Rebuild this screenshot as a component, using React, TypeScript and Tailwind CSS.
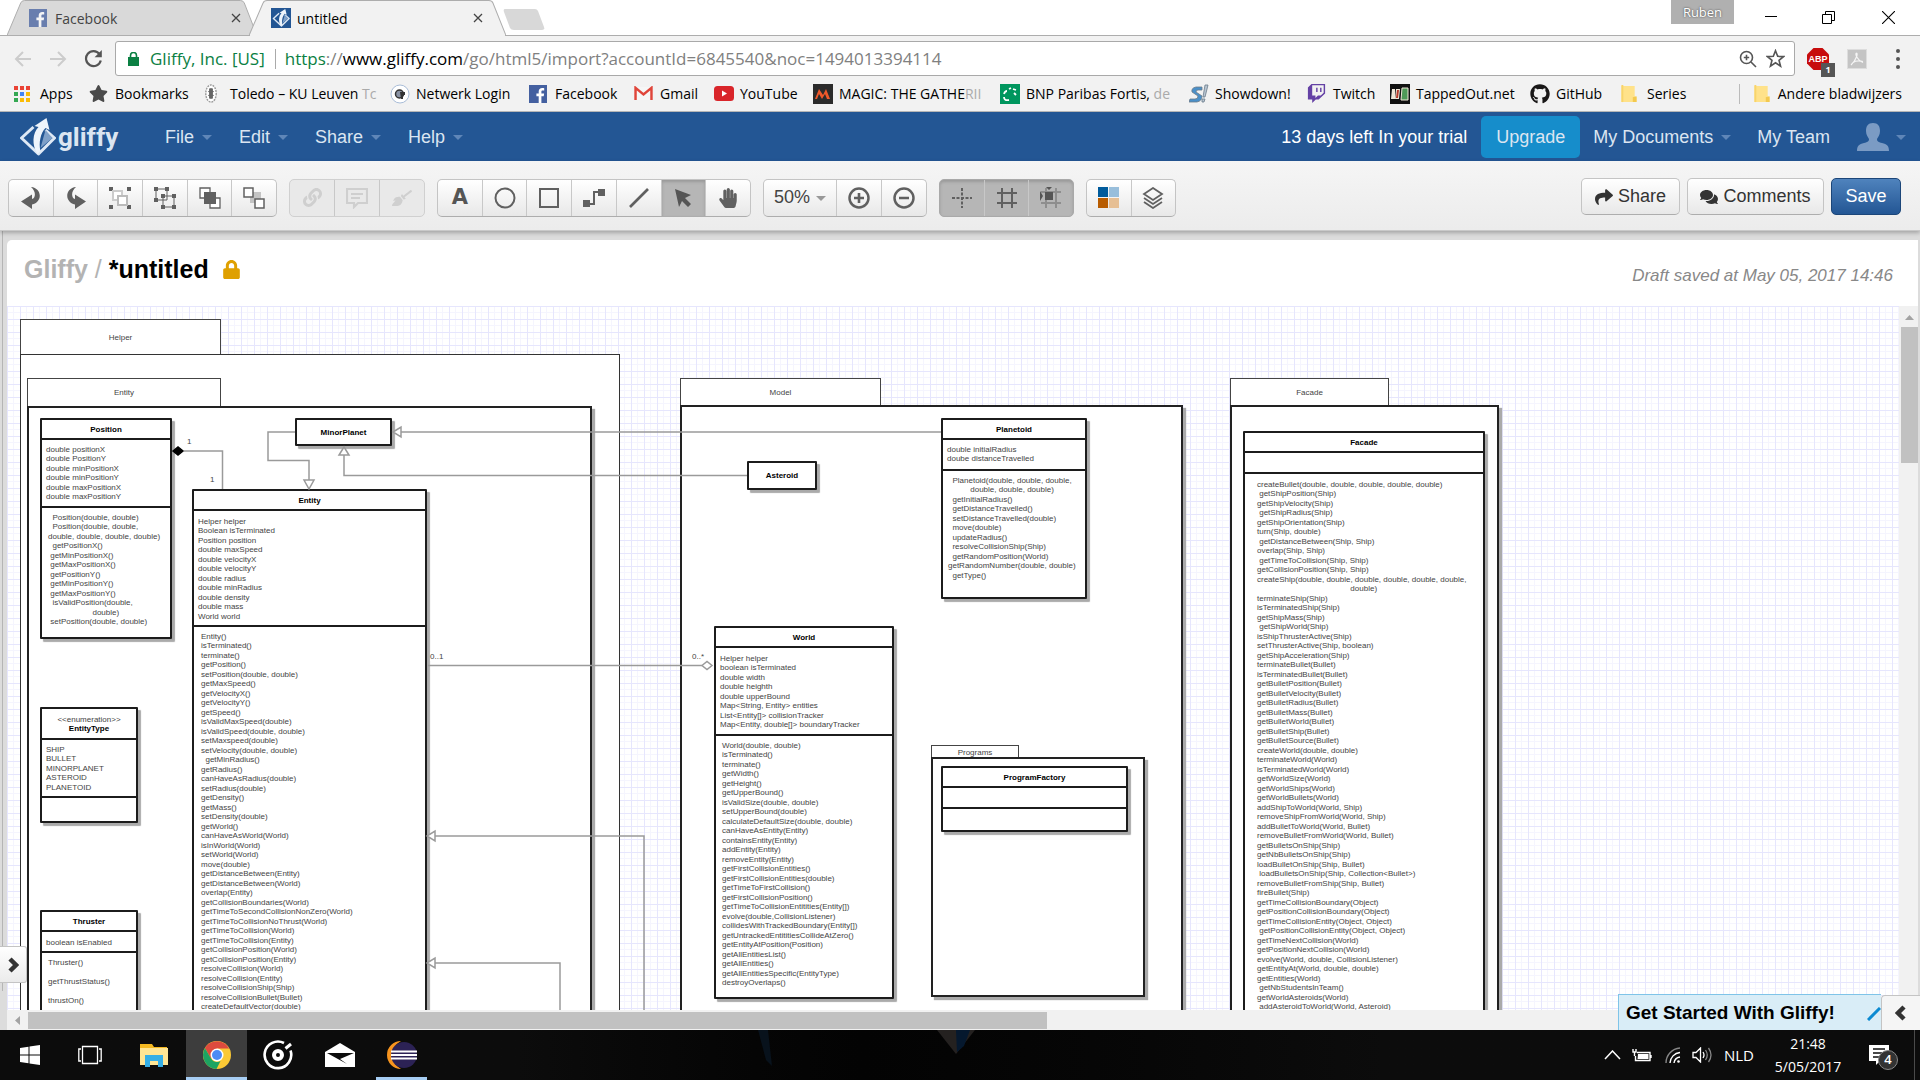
import React from "react";
import {
  FaComments,
  FaGithub,
  FaHandPaper,
  FaLock,
  FaShare,
  FaStar,
  FaTwitch,
  FaBroom,
  FaLink,
} from "react-icons/fa";

const ui = "font-['Open_Sans','Noto_Sans',sans-serif]";

/* ---------- browser window ---------- */

function FacebookIcon({ faded = false }: { faded?: boolean }) {
  return (
    <svg viewBox="0 0 18 18" className={faded ? "size-[18px] opacity-75" : "size-[18px]"} aria-hidden="true">
      <rect width="18" height="18" fill="#4460a0" />
      <path d="M12.4 18v-6.8h2.3l.4-2.7h-2.7V6.9c0-.8.3-1.3 1.4-1.3h1.4V3.2c-.3 0-1.1-.1-2-.1-2.1 0-3.5 1.2-3.5 3.500v1.900H7.400v2.700h2.300V18z" fill="#fff" />
    </svg>
  );
}

function GliffyMark({ className }: { className: string }) {
  return (
    <svg viewBox="0 0 36 38" className={className} aria-hidden="true">
      <path d="M14 9 2 20l17 16 16-16-9-8" fill="none" stroke="#dfe9f5" strokeWidth="3" strokeLinejoin="round" />
      <path d="M26 12l7 8-12 10z" fill="#7fa0c8" />
      <path d="M18 36c-6-9-5-21 1-27l-4-1L27 0l3 12-4-2c-5 5-7 15-5 23z" fill="#eef4fb" />
    </svg>
  );
}

function Tab({ active, title, icon, className }: { active?: boolean; title: string; icon: React.ReactNode; className: string }) {
  return (
    <div className={"relative flex h-[36px] items-center pl-[22px] " + className}>
      <svg viewBox="0 0 256 36" preserveAspectRatio="none" className="absolute inset-0 h-full w-full" aria-hidden="true">
        <path d="M0 35.500 14 3Q15 .5 18 .5H239Q242 .5 243 3L256 35.500z" fill={active ? "#f2f2f2" : "#d9d9d9"} stroke="#adadad" />
        {active && <path d="M1 35.500H255" stroke="#f2f2f2" strokeWidth="2" />}
      </svg>
      <span className="relative flex size-[20px] items-center">{icon}</span>
      <span className={"relative ml-[6px] flex-1 text-[14px] " + (active ? "text-black" : "text-[#444]")}>{title}</span>
      <button aria-label={"Close " + title} className="relative flex size-4 items-center justify-center">
        <svg viewBox="0 0 10 10" className="size-[10px]" aria-hidden="true">
          <path d="M1 1l8 8M9 1 1 9" stroke="#444" strokeWidth="1.300" />
        </svg>
      </button>
    </div>
  );
}

function TabStrip() {
  return (
    <div className="relative flex h-[36px] items-stretch bg-white pl-[7px]">
      <div className="absolute inset-x-0 bottom-0 h-px bg-[#adadad]" />
      <Tab title="Facebook" icon={<FacebookIcon faded />} className="w-[250px] pr-[13px]" />
      <Tab
        active
        title="untitled"
        className="-ml-[8px] w-[257px] pr-[20px]"
        icon={
          <span className="flex size-[20px] items-center justify-center bg-[#235694]">
            <GliffyMark className="size-[18px]" />
          </span>
        }
      />
      <button aria-label="New tab" className="relative -ml-[4px] h-[36px] w-[44px]">
        <svg viewBox="0 0 44 36" className="size-full" aria-hidden="true">
          <path d="M3 9H33q2 0 3 2l6 16q1 3-2 3H12q-3 0-4-2L2 12q-1-3 1-3z" fill="#d8d8d8" />
        </svg>
      </button>
      <div className="relative ml-auto flex">
        <button className={"mr-[7px] h-[24px] w-[63px] bg-[#b0b0b0] text-[13px] leading-[22px] text-white [text-shadow:0_0_2px_#333] " + ui}>Ruben</button>
        <button aria-label="Minimize" className="flex h-[34px] w-[60px] items-center justify-center">
          <svg viewBox="0 0 12 12" className="size-3" aria-hidden="true"><path d="M0 5.500h12" stroke="#000" /></svg>
        </button>
        <button aria-label="Restore" className="flex h-[34px] w-[55px] items-center justify-center">
          <svg viewBox="0 0 13 13" className="size-[13px]" fill="none" stroke="#000" aria-hidden="true">
            <path d="M.5 3.500h9v9h-9zM3.500 3.500v-3h9v9h-3" />
          </svg>
        </button>
        <button aria-label="Close" className="flex h-[34px] w-[64px] items-center justify-center">
          <svg viewBox="0 0 12 12" className="size-[13px]" aria-hidden="true"><path d="M0 0l12 12M12 0 0 12" stroke="#000" /></svg>
        </button>
      </div>
    </div>
  );
}

function AddressBar() {
  return (
    <div className="flex h-[42px] items-center bg-[#f2f2f2] pl-[14px] pr-[11px] pt-[3px]">
      <button aria-label="Back" className="w-[18px]">
        <svg viewBox="0 0 18 18" className="size-[18px]" fill="none" stroke="#ccc" strokeWidth="2" aria-hidden="true"><path d="M17 9H2M9 2 2 9l7 7" /></svg>
      </button>
      <button aria-label="Forward" className="ml-[17px] w-[18px]">
        <svg viewBox="0 0 18 18" className="size-[18px]" fill="none" stroke="#ccc" strokeWidth="2" aria-hidden="true"><path d="M1 9h15M9 2l7 7-7 7" /></svg>
      </button>
      <button aria-label="Reload" className="ml-[17px] w-[19px]">
        <svg viewBox="0 0 19 19" className="size-[19px]" fill="none" stroke="#555" strokeWidth="2.200" aria-hidden="true">
          <path d="M15.500 5A7.500 7.500 0 1 0 16.800 11.500" />
          <path d="M17.800 1v7.200h-7.200z" fill="#555" stroke="none" />
        </svg>
      </button>
      <div className="ml-[12px] flex h-[35px] flex-1 items-center rounded-[3px] border border-[#a9a9a9] bg-white pl-[12px] pr-[9px]">
        <svg viewBox="0 0 11 14" className="h-[14px] w-[11px]" aria-hidden="true">
          <path d="M0 5h11v9H0z" fill="#0b8043" />
          <path d="M2.500 6V3.500a3 3 0 0 1 6 0V6" fill="none" stroke="#0b8043" strokeWidth="1.600" />
        </svg>
        <span className="ml-[11px] text-[17px] text-[#0b8043]">Gliffy, Inc. [US]</span>
        <span className="ml-[10px] h-[20px] w-px bg-[#aaa]" />
        <div role="textbox" aria-label="Address" contentEditable suppressContentEditableWarning className="ml-[9px] flex-1 whitespace-nowrap text-[17px] text-[#808080]">
          <span className="text-[#0b8043]">https</span>://<span className="text-black">www.gliffy.com</span>/go/html5/import?accountId=6845540&amp;noc=1494013394114
        </div>
        <button aria-label="Zoom level">
          <svg viewBox="0 0 18 18" className="size-[18px]" fill="none" stroke="#555" strokeWidth="1.600" aria-hidden="true">
            <circle cx="7.500" cy="7.500" r="6" /><path d="M12 12l5 5M7.500 4.800v5.400M4.800 7.500h5.400" />
          </svg>
        </button>
        <button aria-label="Bookmark this page" className="ml-[9px]">
          <svg viewBox="0 0 20 20" className="size-[19px]" fill="none" stroke="#555" strokeWidth="1.700" aria-hidden="true">
            <path d="m10 1.800 2.300 5.900 6.200.3-4.800 3.900 1.600 6.100L10 14.500 4.700 18l1.600-6.100L1.500 8l6.200-.3z" />
          </svg>
        </button>
      </div>
      <button aria-label="AdBlock Plus, 1 blocked" className="relative ml-[12px] size-[22px]">
        <svg viewBox="0 0 22 22" className="size-[22px]" aria-hidden="true">
          <path d="M6.500 0h9L22 6.500v9L15.500 22h-9L0 15.500v-9z" fill="#c70d0d" />
        </svg>
        <span className="absolute inset-x-0 top-[5px] text-center font-['Liberation_Sans',sans-serif] text-[9px] font-bold leading-[12px] text-white">ABP</span>
        <span className="absolute -bottom-[7px] left-[14px] h-[14px] w-[14px] bg-[#555] text-center text-[9px] font-bold leading-[14px] text-white">1</span>
      </button>
      <button aria-label="Adobe Acrobat" className="ml-[18px] flex size-[20px] items-center justify-center border border-[#ddd] bg-[#c4c4c4]">
        <svg viewBox="0 0 16 16" className="size-4" fill="none" stroke="#f5f5f5" strokeWidth="1.200" aria-hidden="true">
          <path d="M7.500 2C9 2 8 8 2 14M7.500 2C6 3 8 9 14 11.500M4 11.500c3-2 6-2 10-1" />
        </svg>
      </button>
      <button aria-label="Menu" className="ml-[20px] flex w-[22px] flex-col items-center gap-[4px]">
        <span className="size-[4px] rounded-full bg-[#555]" />
        <span className="size-[4px] rounded-full bg-[#555]" />
        <span className="size-[4px] rounded-full bg-[#555]" />
      </button>
    </div>
  );
}

const appColors = ["#ea4335", "#ea4335", "#ea4335", "#34a853", "#4285f4", "#fbbc05", "#34a853", "#fbbc05", "#fbbc05"];

function Folder() {
  return (
    <svg viewBox="0 0 16 19" className="h-[18px] w-[16px]" aria-hidden="true">
      <path d="M0 1h14v11l2 1v5H0z" fill="#ffe28a" />
      <path d="M0 0h2v18H0z" fill="#f8d46b" />
      <path d="M12 18v-5l4-1v6z" fill="#f3c94f" />
    </svg>
  );
}

const bookmarks: { label: string; tail?: string; box: string; icon: React.ReactNode }[] = [
  {
    label: "Apps",
    box: "w-[75px]",
    icon: (
      <span className="grid grid-cols-3 gap-[2px]">
        {appColors.map((c, i) => (
          <span key={i} className="size-[4px]" style={{ background: c }} />
        ))}
      </span>
    ),
  },
  { label: "Bookmarks", box: "w-[115px]", icon: <FaStar className="size-[19px] text-[#4a4a4a]" /> },
  {
    label: "Toledo – KU Leuven ",
    tail: "Tc",
    box: "w-[186px]",
    icon: (
      <svg viewBox="0 0 14 20" className="h-[19px] w-[14px]" aria-hidden="true">
        <ellipse cx="7" cy="10" rx="5.500" ry="9" fill="#fff" stroke="#999" strokeWidth="1.500" strokeDasharray="2 1" />
        <path d="M5.500 5h3v10h-3zM4 8h6M4 12h6" fill="#666" stroke="#666" />
      </svg>
    ),
  },
  {
    label: "Netwerk Login",
    box: "w-[139px]",
    icon: (
      <svg viewBox="0 0 20 20" className="size-[20px]" aria-hidden="true">
        <circle cx="10" cy="10" r="9" fill="#fff" stroke="#a9bdd8" />
        <circle cx="9.500" cy="10" r="4" fill="#8a93a5" stroke="#333" strokeWidth="1.500" />
        <path d="M10 8h5v3h-2v4h-2z" fill="#333" />
      </svg>
    ),
  },
  { label: "Facebook", box: "w-[105px]", icon: <FacebookIcon /> },
  {
    label: "Gmail",
    box: "w-[80px]",
    icon: (
      <svg viewBox="0 0 20 16" className="h-[15px] w-[19px]" aria-hidden="true">
        <path d="M1 1h18v14H1z" fill="#f6f6f6" />
        <path d="M1.500 15V2L10 9l8.500-7v13" fill="none" stroke="#e0453a" strokeWidth="2.600" />
      </svg>
    ),
  },
  {
    label: "YouTube",
    box: "w-[99px]",
    icon: (
      <svg viewBox="0 0 20 15" className="h-[15px] w-[20px]" aria-hidden="true">
        <rect width="20" height="15" rx="3.500" fill="#d9252a" /><path d="m8 4.500 5 3-5 3z" fill="#fff" />
      </svg>
    ),
  },
  {
    label: "MAGIC: THE GATHE",
    tail: "RII",
    box: "w-[187px]",
    icon: (
      <svg viewBox="0 0 20 20" className="size-[20px]" aria-hidden="true">
        <rect width="20" height="20" fill="#2b2b2b" />
        <path d="M2 15 6 5l4 6 3-6 4 10h-3l-2-5-3 5-3-5-2 5z" fill="#f0592a" />
      </svg>
    ),
  },
  {
    label: "BNP Paribas Fortis,",
    tail: " de",
    box: "w-[189px]",
    icon: (
      <svg viewBox="0 0 20 20" className="size-[20px]" aria-hidden="true">
        <rect width="20" height="20" fill="#00965e" />
        <path d="M4 13q0 4 5 3M4 10q1-3 3-3M9 5l2-1M13 5l3 1M14 9l2 2" fill="none" stroke="#fff" strokeWidth="1.800" />
      </svg>
    ),
  },
  {
    label: "Showdown!",
    box: "w-[118px]",
    icon: (
      <svg viewBox="0 0 20 20" className="size-[20px]" aria-hidden="true">
        <path d="M13 3H7Q2 4 3 8l6 4q0 3-3 3H1l-1 3h8q5-1 5-6L7 8q0-2 2-2h4z" fill="#4a90c9" stroke="#6b7b8a" strokeWidth=".8" />
        <path d="M16 1h3l-3 12h-2zM13 15h3l-1 3h-2z" fill="#b9c6d2" stroke="#6b7b8a" strokeWidth=".8" />
      </svg>
    ),
  },
  { label: "Twitch", box: "w-[83px]", icon: <FaTwitch className="size-[19px] text-[#6441a5]" /> },
  {
    label: "TappedOut.net",
    box: "w-[140px]",
    icon: (
      <svg viewBox="0 0 20 20" className="size-[20px]" aria-hidden="true">
        <rect width="20" height="20" fill="#111" />
        <path d="M2 5h3v10H1zM6 5h4l-1 10H5z" fill="#f0e7d8" />
        <path d="M7 6h2l-1 8H6z" fill="#b83a2a" /><path d="M12 4h6v12h-7z" fill="#4f9a58" stroke="#f0e7d8" />
      </svg>
    ),
  },
  { label: "GitHub", box: "w-[91px]", icon: <FaGithub className="size-[20px] text-[#191717]" /> },
  { label: "Series", box: "w-[80px]", icon: <Folder /> },
];

function BookmarkBar() {
  return (
    <nav aria-label="Bookmarks" className="flex h-[34px] items-center border-b border-[#b6b6b6] bg-[#f2f2f2] pb-[2px] pl-[14px] pr-[18px] text-[14px] text-black">
      {bookmarks.map((b) => (
        <a key={b.label} href="#" className={"flex shrink-0 items-center gap-[6px] whitespace-nowrap " + b.box}>
          <span className="flex w-[20px] shrink-0 items-center">{b.icon}</span>
          <span>
            {b.label}
            {b.tail && <span className="text-[#aaa]">{b.tail}</span>}
          </span>
        </a>
      ))}
      <span className="ml-auto h-[20px] w-px bg-[#bbb]" />
      <a href="#" className="ml-[14px] flex items-center gap-[8px] whitespace-nowrap">
        <Folder />
        Andere bladwijzers
      </a>
    </nav>
  );
}

/* ---------- application header ---------- */

function Caret({ className }: { className: string }) {
  return (
    <svg viewBox="0 0 10 5" className={"h-[5px] w-[10px] " + className} aria-hidden="true">
      <path d="M0 0h10L5 5z" fill="currentColor" />
    </svg>
  );
}

const menus = [
  { label: "File", box: "w-[74px]" },
  { label: "Edit", box: "w-[76px]" },
  { label: "Share", box: "w-[93px]" },
  { label: "Help", box: "w-[60px]" },
];

function AppNav() {
  return (
    <header className="flex h-[49px] shrink-0 items-center bg-[#235694] pl-[19px] pr-[14px] pt-px text-[18px] text-[#dbe5f1]">
      <a href="#" className="flex w-[146px] items-center">
        <GliffyMark className="h-[38px] w-[37px]" />
        <span className="ml-[2px] font-['Roboto',sans-serif] text-[26px] font-bold leading-[36px]">gliffy</span>
      </a>
      {menus.map((m) => (
        <button key={m.label} className={"flex items-center gap-[8px] " + m.box}>
          {m.label}
          <Caret className="text-[#5f86b8]" />
        </button>
      ))}
      <span className="ml-auto text-white">13 days left In your trial</span>
      <button className="ml-[14px] h-[42px] w-[99px] rounded-[5px] bg-[#168dcb]">Upgrade</button>
      <button className="ml-[13px] flex items-center gap-[8px]">
        My Documents
        <Caret className="text-[#5f86b8]" />
      </button>
      <a href="#" className="ml-[26px]">My Team</a>
      <button aria-label="Account" className="ml-[27px] flex items-center gap-[7px]">
        <svg viewBox="0 0 32 28" className="h-[28px] w-[32px]" aria-hidden="true">
          <path d="M16 0c5 0 7 3 7 8 0 4-2 6-3 8 0 3 2 3 5 4 5 1 7 3 7 8H0c0-5 2-7 7-8 3-1 5-1 5-4-1-2-3-4-3-8 0-5 2-8 7-8z" fill="#7b9bc4" />
        </svg>
        <Caret className="text-[#5f86b8]" />
      </button>
    </header>
  );
}

/* ---------- toolbar ---------- */

type Tone = "normal" | "disabled" | "pressed";

function Group({ children, tone = "normal", box }: { children: React.ReactNode; tone?: Tone; box: string }) {
  const tones = {
    normal: "border-[#c4c4c4] border-b-[#adadad] bg-linear-to-b from-white to-[#e8e8e8]",
    disabled: "border-[#d0d0d0] bg-[#e9e9e9]",
    pressed: "border-[#a9a9a9] bg-[#b6b6b6]",
  };
  return <div className={"flex h-[38px] divide-x divide-[#c8c8c8] overflow-hidden rounded-[5px] border " + tones[tone] + " " + box}>{children}</div>;
}

function Tool({ label, children, pressed, disabled }: { label: string; children: React.ReactNode; pressed?: boolean; disabled?: boolean }) {
  return (
    <button
      aria-label={label}
      disabled={disabled}
      className={"flex flex-1 items-center justify-center " + (pressed ? "bg-[#b6b6b6] shadow-[inset_0_2px_3px_#999]" : "")}
    >
      {children}
    </button>
  );
}

function Glyph({ children }: { children: React.ReactNode }) {
  return (
    <svg viewBox="0 0 22 22" className="size-[22px]" fill="none" stroke="#606060" strokeWidth="2" aria-hidden="true">
      {children}
    </svg>
  );
}

function Toolbar() {
  return (
    <div className="relative z-10 flex h-[70px] shrink-0 items-center border-b border-[#c9c9c9] bg-linear-to-b from-[#f5f5f5] to-[#ececec] pl-[8px] pr-[19px] pt-[4px] shadow-[0_2px_4px_rgba(0,0,0,0.25)]">
      <Group box="w-[269px]">
        <Tool label="Undo">
          <Glyph><path d="M11 0c11 1 12 15 1 17.500V22L1 14.500 12 7.500V12c4-1 4-8-1-12z" fill="#606060" stroke="none" /></Glyph>
        </Tool>
        <Tool label="Redo">
          <Glyph><path d="M11 0C0 1-1 15 10 17.500V22l11-7.500-11-7V12C6 11 6 4 11 0z" fill="#606060" stroke="none" /></Glyph>
        </Tool>
        <Tool label="Group">
          <Glyph>
            <path d="M0 0h4v4H0zM18 0h4v4h-4zM0 18h4v4H0zM18 18h4v4h-4z" fill="#606060" stroke="none" />
            <path d="M4 4h9v9H4z" fill="#fff" stroke="#ccc" /><path d="M9 9h9v9H9z" fill="#fff" stroke="#bbb" />
          </Glyph>
        </Tool>
        <Tool label="Ungroup">
          <Glyph>
            <path d="M2 2h11v11H2zM9 9h11v11H9z" strokeWidth="1" />
            <path d="M0 0h4v4H0zM11 0h4v4h-4zM0 11h4v4H0zM7 7h4v4H7zM18 7h4v4h-4zM7 18h4v4H7zM18 18h4v4h-4z" fill="#606060" stroke="none" />
          </Glyph>
        </Tool>
        <Tool label="Bring to front">
          <Glyph>
            <path d="M1 1h10v10H1zM11 11h10v10H11z" fill="#fff" strokeWidth="1.300" /><path d="M5 5h12v12H5z" fill="#606060" stroke="none" />
          </Glyph>
        </Tool>
        <Tool label="Send to back">
          <Glyph>
            <path d="M7 5h11v11H7z" fill="#c4c4c4" stroke="none" /><path d="M1 1h9v9H1zM12 12h9v9h-9z" fill="#fff" strokeWidth="1.500" />
          </Glyph>
        </Tool>
      </Group>
      <Group tone="disabled" box="ml-[12px] w-[136px]">
        <Tool label="Link" disabled><FaLink className="size-[19px] text-[#cfcfcf]" /></Tool>
        <Tool label="Comment" disabled>
          <svg viewBox="0 0 22 22" className="size-[22px]" fill="none" stroke="#cfcfcf" strokeWidth="2.200" aria-hidden="true">
            <path d="M1 2h20v14h-9l-4 4v-4H1zM5 7h12M5 11h9" />
          </svg>
        </Tool>
        <Tool label="Copy style" disabled><FaBroom className="size-[20px] text-[#cfcfcf]" /></Tool>
      </Group>
      <Group box="ml-[12px] w-[314px]">
        <Tool label="Text"><span className="font-['DejaVu_Sans',sans-serif] text-[21px] font-bold text-[#555]">A</span></Tool>
        <Tool label="Ellipse"><Glyph><circle cx="11" cy="11" r="9.500" /></Glyph></Tool>
        <Tool label="Rectangle"><Glyph><path d="M2 2h18v18H2z" /></Glyph></Tool>
        <Tool label="Connector">
          <Glyph><path d="M3 17h8V5h8" /><path d="M0 13h7v7H0zM15 2h7v7h-7z" fill="#606060" stroke="none" /></Glyph>
        </Tool>
        <Tool label="Line"><Glyph><path d="M2 20 20 2" strokeWidth="2.600" /></Glyph></Tool>
        <Tool label="Pointer" pressed>
          <Glyph><path d="M3 2l16 6-6 3 6 6-3 3-6-6-3 6z" fill="#555" stroke="none" /></Glyph>
        </Tool>
        <Tool label="Pan"><FaHandPaper className="size-[20px] text-[#606060]" /></Tool>
      </Group>
      <Group box="ml-[12px] w-[164px]">
        <div className="relative flex w-[73px] items-center">
          <select aria-label="Zoom" defaultValue="50" className="h-full w-full appearance-none bg-transparent pl-[10px] text-[18px] text-[#444]">
            <option value="50">50%</option>
            <option value="75">75%</option>
          </select>
          <span className="pointer-events-none absolute right-[10px] top-[16px]"><Caret className="text-[#999]" /></span>
        </div>
        <Tool label="Zoom in"><Glyph><circle cx="11" cy="11" r="9.500" strokeWidth="2.500" /><path d="M11 6v10M6 11h10" strokeWidth="2.600" /></Glyph></Tool>
        <Tool label="Zoom out"><Glyph><circle cx="11" cy="11" r="9.500" strokeWidth="2.500" /><path d="M6 11h10" strokeWidth="2.600" /></Glyph></Tool>
      </Group>
      <Group tone="pressed" box="ml-[12px] w-[135px] divide-[#a6a6a6] shadow-[inset_0_2px_3px_#999]">
        <Tool label="Drawing guides"><Glyph><path d="M11 1v20M1 11h20" strokeDasharray="3 1.500" /></Glyph></Tool>
        <Tool label="Grid"><Glyph><path d="M6 1v20M16 1v20M1 6h20M1 16h20" /></Glyph></Tool>
        <Tool label="Snap to grid">
          <Glyph><path d="M6 1v20M16 1v20M1 5h20M1 16h20" stroke="#8e8e8e" /><path d="M5 5h8v8H5zM0 4l3 5-3 5zM6 0h6l-3 3z" fill="#555" stroke="none" /></Glyph>
        </Tool>
      </Group>
      <Group box="ml-[12px] w-[90px]">
        <Tool label="Theme">
          <svg viewBox="0 0 22 22" className="size-[21px]" aria-hidden="true">
            <path d="M0 0h10.500v10.500H0z" fill="#005b9c" /><path d="M11.500 0H22v10.500H11.500z" fill="#98bedb" />
            <path d="M0 11.500h10.500V22H0z" fill="#b85c00" /><path d="M11.500 11.500H22V22H11.500z" fill="#e6bf94" />
          </svg>
        </Tool>
        <Tool label="Layers">
          <Glyph><path d="m11 1 9 6-9 6-9-6zM2 11l9 6 9-6M2 15l9 6 9-6" strokeWidth="1.800" /></Glyph>
        </Tool>
      </Group>
      <div className="ml-auto flex gap-[7px] pb-[2px] text-[18px] text-[#333]">
        <button className="flex h-[37px] w-[99px] items-center justify-center gap-[5px] rounded-[5px] border border-[#c4c4c4] border-b-[#adadad] bg-linear-to-b from-white to-[#e8e8e8]">
          <FaShare className="size-[18px]" />
          Share
        </button>
        <button className="flex h-[37px] w-[137px] items-center justify-center gap-[5px] rounded-[5px] border border-[#c4c4c4] border-b-[#adadad] bg-linear-to-b from-white to-[#e8e8e8]">
          <FaComments className="size-[18px]" />
          Comments
        </button>
        <button className="h-[37px] w-[70px] rounded-[5px] border border-[#1c4679] bg-linear-to-b from-[#4f83bd] to-[#235694] text-white">Save</button>
      </div>
    </div>
  );
}

/* ---------- diagram ---------- */

const packages = [
  { name: "Helper", tab: "left-[13px] top-[13px] w-[201px] h-[36px]", body: "left-[13px] top-[48px] w-[600px] h-[1200px]", line: "border border-[#333]" },
  { name: "Entity", tab: "left-[20px] top-[72px] w-[194px] h-[29px]", body: "left-[20px] top-[100px] w-[565px] h-[1200px] shadow-[3px_3px_1px_#aaa]", line: "border-2 border-[#222]" },
  { name: "Model", tab: "left-[673px] top-[72px] w-[201px] h-[29px]", body: "left-[673px] top-[99px] w-[503px] h-[1200px] shadow-[3px_3px_1px_#aaa]", line: "border-2 border-[#222]" },
  { name: "Facade", tab: "left-[1223px] top-[72px] w-[159px] h-[29px]", body: "left-[1223px] top-[99px] w-[269px] h-[1200px] shadow-[3px_3px_1px_#aaa]", line: "border-2 border-[#222]" },
  { name: "Programs", tab: "left-[924px] top-[439px] w-[88px] h-[14px]", body: "left-[924px] top-[451px] w-[214px] h-[240px] shadow-[3px_3px_1px_#aaa]", line: "border-2 border-[#222]" },
];

type ClassNode = {
  name: string;
  stereotype?: string;
  box: string;
  head?: string;
  attrBox?: string;
  attrs?: string[];
  pad?: string;
  methods?: string[];
};

const classes: ClassNode[] = [
  {
    name: "Position",
    box: "left-[33px] top-[112px] w-[132px] h-[221px]",
    attrBox: "h-[68px] pt-[5px]",
    attrs: ["double positionX", "double PositionY", "double minPositionX", "double minPositionY", "double maxPositionX", "double maxPositionY"],
    pad: "pl-[6px] pt-[5px]",
    methods: [
      "  Position(double, double)",
      "  Position(double, double,",
      "double, double, double, double)",
      "  getPositionX()",
      " getMinPositionX()",
      " getMaxPositionX()",
      " getPositionY()",
      " getMinPositionY()",
      " getMaxPositionY()",
      "  isValidPosition(double,",
      "                    double)",
      " setPosition(double, double)",
    ],
  },
  {
    name: "Entity",
    box: "left-[185px] top-[183px] w-[235px] h-[1000px]",
    attrBox: "h-[116px] pt-[6px]",
    attrs: ["Helper helper", "Boolean isTerminated", "Position position", "double maxSpeed", "double velocityX", "double velocityY", "double radius", "double minRadius", "double density", "double mass", "World world"],
    pad: "pl-[7px] pt-[5px]",
    methods: [
      "Entity()",
      "isTerminated()",
      "terminate()",
      "getPosition()",
      "setPosition(double, double)",
      "getMaxSpeed()",
      "getVelocityX()",
      "getVelocityY()",
      "getSpeed()",
      "isValidMaxSpeed(double)",
      "isValidSpeed(double, double)",
      "setMaxspeed(double)",
      "setVelocity(double, double)",
      "  getMinRadius()",
      "getRadius()",
      "canHaveAsRadius(double)",
      "setRadius(double)",
      "getDensity()",
      "getMass()",
      "setDensity(double)",
      "getWorld()",
      "canHaveAsWorld(World)",
      "isInWorld(World)",
      "setWorld(World)",
      "move(double)",
      "getDistanceBetween(Entity)",
      "getDistanceBetween(World)",
      "overlap(Entity)",
      "getCollisionBoundaries(World)",
      "getTimeToSecondCollisionNonZero(World)",
      "getTimeToCollisionNoThrust(World)",
      "getTimeToCollision(World)",
      "getTimeToCollision(Entity)",
      "getCollisionPosition(World)",
      "getCollisionPosition(Entity)",
      "resolveCollision(World)",
      "resolveCollision(Entity)",
      "resolveCollisionShip(Ship)",
      "resolveCollisionBullet(Bullet)",
      "createDefaultVector(double)",
    ],
  },
  {
    name: "EntityType",
    stereotype: "<<enumeration>>",
    box: "left-[33px] top-[401px] w-[98px] h-[116px]",
    head: "h-[31px]",
    attrBox: "h-[58px] pt-[5px]",
    attrs: ["SHIP", "BULLET", "MINORPLANET", "ASTEROID", "PLANETOID"],
    methods: [],
  },
  {
    name: "Thruster",
    box: "left-[33px] top-[604px] w-[98px] h-[600px]",
    attrBox: "h-[21px] pt-[6px]",
    attrs: ["boolean isEnabled"],
    pad: "pl-[6px] pt-[5px]",
    methods: ["Thruster()", "", "getThrustStatus()", "", "thrustOn()"],
  },
  { name: "MinorPlanet", box: "left-[288px] top-[112px] w-[97px] h-[28px]", head: "flex-1" },
  { name: "Asteroid", box: "left-[740px] top-[155px] w-[70px] h-[29px]", head: "flex-1" },
  {
    name: "Planetoid",
    box: "left-[934px] top-[112px] w-[146px] h-[181px]",
    attrBox: "h-[31px] pt-[5px]",
    attrs: ["double initialRadius", "doube distanceTravelled"],
    pad: "pl-[5px] pt-[5px]",
    methods: [
      "  Planetoid(double, double, double,",
      "          double, double, double)",
      "  getInitialRadius()",
      "  getDistanceTravelled()",
      "  setDistanceTravelled(double)",
      "  move(double)",
      "  updateRadius()",
      "  resolveCollisionShip(Ship)",
      "  getRandomPosition(World)",
      "getRandomNumber(double, double)",
      "  getType()",
    ],
  },
  {
    name: "World",
    box: "left-[707px] top-[320px] w-[180px] h-[373px]",
    attrBox: "h-[88px] pt-[6px]",
    attrs: ["Helper helper", "boolean isTerminated", "double width", "double heighth", "double upperBound", "Map<String, Entity> entities", "List<Entity[]> collisionTracker", "Map<Entity, double[]> boundaryTracker"],
    pad: "pl-[6px] pt-[5px]",
    methods: [
      "World(double, double)",
      "isTerminated()",
      "terminate()",
      "getWidth()",
      "getHeight()",
      "getUpperBound()",
      "isValidSize(double, double)",
      "setUpperBound(double)",
      "calculateDefaultSize(double, double)",
      "canHaveAsEntity(Entity)",
      "containsEntity(Entity)",
      "addEntity(Entity)",
      "removeEntity(Entity)",
      "getFirstCollisionEntities()",
      "getFirstCollisionEntities(double)",
      "getTimeToFirstCollision()",
      "getFirstCollisionPosition()",
      "getTimeToCollisionEntitities(Entity[])",
      "evolve(double,CollisionListener)",
      "collidesWithTrackedBoundary(Entity[])",
      "getUntrackedEntititiesCollideAtZero()",
      "getEntityAtPosition(Position)",
      "getAllEntitiesList()",
      "getAllEntities()",
      "getAllEntitiesSpecific(EntityType)",
      "destroyOverlaps()",
    ],
  },
  { name: "ProgramFactory", box: "left-[934px] top-[460px] w-[187px] h-[66px]", attrBox: "h-[21px]", attrs: [], methods: [] },
  {
    name: "Facade",
    box: "left-[1236px] top-[125px] w-[242px] h-[1000px]",
    attrBox: "h-[21px]",
    attrs: [],
    pad: "pl-[12px] pt-[6px]",
    methods: [
      "createBullet(double, double, double, double, double)",
      " getShipPosition(Ship)",
      "getShipVelocity(Ship)",
      " getShipRadius(Ship)",
      "getShipOrientation(Ship)",
      "turn(Ship, double)",
      " getDistanceBetween(Ship, Ship)",
      "overlap(Ship, Ship)",
      " getTimeToCollision(Ship, Ship)",
      "getCollisionPosition(Ship, Ship)",
      "createShip(double, double, double, double, double, double,",
      "                                          double)",
      "terminateShip(Ship)",
      "isTerminatedShip(Ship)",
      "getShipMass(Ship)",
      " getShipWorld(Ship)",
      "isShipThrusterActive(Ship)",
      "setThrusterActive(Ship, boolean)",
      "getShipAcceleration(Ship)",
      "terminateBullet(Bullet)",
      "isTerminatedBullet(Bullet)",
      "getBulletPosition(Bullet)",
      "getBulletVelocity(Bullet)",
      "getBulletRadius(Bullet)",
      "getBulletMass(Bullet)",
      "getBulletWorld(Bullet)",
      "getBulletShip(Bullet)",
      "getBulletSource(Bullet)",
      "createWorld(double, double)",
      "terminateWorld(World)",
      "isTerminatedWorld(World)",
      "getWorldSize(World)",
      "getWorldShips(World)",
      "getWorldBullets(World)",
      "addShipToWorld(World, Ship)",
      "removeShipFromWorld(World, Ship)",
      "addBulletToWorld(World, Bullet)",
      "removeBulletFromWorld(World, Bullet)",
      "getBulletsOnShip(Ship)",
      "getNbBulletsOnShip(Ship)",
      "loadBulletOnShip(Ship, Bullet)",
      " loadBulletsOnShip(Ship, Collection<Bullet>)",
      "removeBulletFromShip(Ship, Bullet)",
      "fireBullet(Ship)",
      "getTimeCollisionBoundary(Object)",
      "getPositionCollisionBoundary(Object)",
      "getTimeCollisionEntity(Object, Object)",
      " getPositionCollisionEntity(Object, Object)",
      "getTimeNextCollision(World)",
      "getPositionNextCollision(World)",
      "evolve(World, double, CollisionListener)",
      "getEntityAt(World, double, double)",
      "getEntities(World)",
      " getNbStudentsInTeam()",
      "getWorldAsteroids(World)",
      " addAsteroidToWorld(World, Asteroid)",
    ],
  },
];

function Lines({ items }: { items: string[] }) {
  return (
    <ul>
      {items.map((t, i) => (
        <li key={i} className="h-[9px] whitespace-pre leading-[9px] even:h-[10px]">
          {t}
        </li>
      ))}
    </ul>
  );
}

function ClassBox({ node }: { node: ClassNode }) {
  return (
    <section className={"absolute flex flex-col rounded-[1px] border-2 border-[#1c1c1c] bg-white shadow-[3px_3px_1px_#aaa] " + node.box}>
      <h3 className={"flex shrink-0 flex-col items-center justify-center text-center leading-[9px] " + (node.head ?? "h-[20px]") + (node.attrs ? " border-b-2 border-[#1c1c1c]" : "")}>
        {node.stereotype && <span>{node.stereotype}</span>}
        <span className="font-bold text-black">{node.name}</span>
      </h3>
      {node.attrs && (
        <div className={"shrink-0 border-b-2 border-[#1c1c1c] pl-[4px] " + node.attrBox}>
          <Lines items={node.attrs} />
        </div>
      )}
      {node.methods && (
        <div className={"flex-1 " + (node.pad ?? "")}>
          <Lines items={node.methods} />
        </div>
      )}
    </section>
  );
}

function Connectors() {
  return (
    <svg className="absolute inset-0 h-full w-full" fill="none" stroke="#9a9a9a" strokeWidth="1.500" aria-hidden="true">
      <path d="M177 145H215.500V183" />
      <path d="M166 145l5-4 5 4-5 4z" fill="#000" stroke="#000" />
      <path d="M288 126H261V154.500H302V174" />
      <path d="M297 174h10l-5 9z" fill="#fff" />
      <path d="M394 126H934" />
      <path d="M386 126l8-5v10z" fill="#fff" />
      <path d="M337 149V169.500H740" />
      <path d="M337 141l5 8h-10z" fill="#fff" />
      <path d="M421 359.500H695" />
      <path d="M695 359.500l5-4 5 4-5 4z" fill="#fff" />
      <path d="M428 530H637V900" />
      <path d="M420 530l8-5v10z" fill="#fff" />
      <path d="M428 657H553V900" />
      <path d="M420 657l8-5v10z" fill="#fff" />
    </svg>
  );
}

const edgeLabels = [
  { text: "1", at: "left-[180px] top-[131px]" },
  { text: "1", at: "left-[203px] top-[169px]" },
  { text: "0..1", at: "left-[423px] top-[346px] bg-white" },
  { text: "0..*", at: "left-[685px] top-[346px]" },
];

function Canvas() {
  return (
    <main
      aria-label="Diagram"
      className="relative min-w-0 flex-1 overflow-hidden bg-white bg-[linear-gradient(#e6e6fd_1px,transparent_1px),linear-gradient(90deg,#e6e6fd_1px,transparent_1px),linear-gradient(transparent_6px,#f5f5fe_6px,#f5f5fe_7px,transparent_7px),linear-gradient(90deg,transparent_6px,#f5f5fe_6px,#f5f5fe_7px,transparent_7px)] bg-[length:13px_13px] text-[8px] text-[#444]"
    >
      {packages.map((p) => (
        <React.Fragment key={p.name}>
          <div className={"absolute flex items-center justify-center border border-[#444] bg-white leading-[9px] " + p.tab}>{p.name}</div>
          <div className={"absolute bg-white " + p.line + " " + p.body} />
        </React.Fragment>
      ))}
      {classes.map((c) => (
        <ClassBox key={c.name} node={c} />
      ))}
      <Connectors />
      {edgeLabels.map((l, i) => (
        <span key={i} className={"absolute leading-[9px] " + l.at}>{l.text}</span>
      ))}
    </main>
  );
}

function Workspace() {
  return (
    <div className="relative flex min-h-0 flex-1 flex-col bg-[#dcdcdc] pl-[7px] pr-[2px] pt-[9px]">
      <div className="absolute left-[2px] top-0 h-[760px] w-px bg-[#b5b5b5]" />
      <div className="flex h-[66px] shrink-0 items-start justify-between rounded-tl-[5px] bg-white pl-[17px] pr-[25px]">
        <h1 className="flex items-center pt-[15px] text-[25px] font-bold leading-[28px] text-black">
          <span className="whitespace-pre text-[#b3b3b3]">Gliffy <span className="font-normal">/</span> </span>*untitled
          <FaLock className="ml-[13px] size-[19px] text-[#dfa000]" />
        </h1>
        <p className="pt-[26px] text-[17px] italic leading-[20px] text-[#888]">Draft saved at May 05, 2017 14:46</p>
      </div>
      <div className="flex min-h-0 flex-1">
        <Canvas />
        <div className="flex w-[19px] shrink-0 flex-col items-end bg-[#f1f1f1]">
          <svg viewBox="0 0 17 21" className="h-[21px] w-[17px]" aria-hidden="true"><path d="M4 14h9L8.500 9z" fill="#a3a3a3" /></svg>
          <div className="h-[136px] w-[17px] bg-[#c1c1c1]" />
        </div>
      </div>
      <div className="flex h-[20px] shrink-0 items-center bg-[#f1f1f1]">
        <svg viewBox="0 0 21 17" className="h-[17px] w-[21px]" aria-hidden="true"><path d="M13 4v9L8 8.500z" fill="#a3a3a3" /></svg>
        <div className="h-[17px] w-8/15 bg-[#c1c1c1]" />
      </div>
      <button aria-label="Show shape library" className="absolute bottom-[47px] left-0 flex h-[37px] w-[27px] items-center justify-center rounded-r-[3px] border border-l-0 border-[#c4c4c4] bg-linear-to-b from-white to-[#ebebeb]">
        <svg viewBox="0 0 11 16" className="h-[16px] w-[11px]" fill="none" stroke="#333" strokeWidth="4.500" aria-hidden="true"><path d="m2 2 6 6-6 6" /></svg>
      </button>
      <div className="absolute bottom-0 right-0 flex h-[36px] w-[302px] items-end">
        <div className="flex h-[36px] flex-1 items-center justify-between border-l border-t border-[#7fc4e8] bg-[#d9edf7] pl-[7px] pt-[2px]">
          <h2 className="whitespace-nowrap text-[19px] font-bold text-black">Get Started With Gliffy!</h2>
          <svg viewBox="0 0 14 14" className="h-[14px] w-[14px]" aria-hidden="true"><path d="M1 13 13 1" stroke="#0a8ad2" strokeWidth="3" /></svg>
        </div>
        <button aria-label="Show side panel" className="flex h-[35px] w-[39px] items-center justify-center rounded-tl-[4px] border-l border-t border-[#c4c4c4] bg-[#f5f5f5] pr-[2px]">
          <svg viewBox="0 0 11 16" className="h-[16px] w-[11px]" fill="none" stroke="#333" strokeWidth="4.500" aria-hidden="true"><path d="M9 2 3 8l6 6" /></svg>
        </button>
      </div>
    </div>
  );
}

/* ---------- taskbar ---------- */

function Taskbar() {
  return (
    <footer className={"relative flex h-[50px] shrink-0 items-center bg-linear-to-r from-[#0c0c0c] from-27% via-[#030303] via-45% to-[#0c0c0c] to-72% text-white " + ui}>
      <svg viewBox="0 0 260 50" className="pointer-events-none absolute left-[750px] top-0 h-[50px] w-[260px]" aria-hidden="true">
        <path d="M8 0h10l4 36-6-6z" fill="#08121c" />
        <path d="M187 0h38l-19 24z" fill="#242120" /><path d="M206 0h14l-6 16-7 6z" fill="#05182e" />
      </svg>
      <button aria-label="Start" className="flex h-full w-[60px] items-center justify-center">
        <svg viewBox="0 0 20 20" className="size-[20px]" fill="#fff" aria-hidden="true"><path d="M0 3l8.500-1.200v7.700H0zM9.500 1.600 20 0v9.500H9.500zM0 10.500h8.500v7.700L0 17zM9.500 10.500H20V20L9.500 18.400z" /></svg>
      </button>
      <button aria-label="Task view" className="flex h-full w-[60px] items-center justify-center">
        <svg viewBox="0 0 24 20" className="h-[20px] w-[24px]" fill="none" stroke="#fff" strokeWidth="1.300" aria-hidden="true"><path d="M4.500 1.500h15v17h-15zM3 4H.8v12H3M21 4h2.200v12H21" /></svg>
      </button>
      <button aria-label="File Explorer" className="flex h-full w-[66px] items-center justify-center pl-[2px]">
        <svg viewBox="0 0 28 24" className="h-[24px] w-[28px]" aria-hidden="true">
          <path d="M0 1h12l2 3h13v18H0z" fill="#f5b921" /><path d="M0 5h28v17H0z" fill="#ffe594" /><path d="M5 24V12h18v12h-5v-6h-8v6z" fill="#35aee6" />
        </svg>
      </button>
      <button aria-label="Google Chrome" className="flex h-full w-[61px] items-center justify-center border-b-[3px] border-[#a6cdf3] bg-[#3d3d3d] pt-[3px]">
        <svg viewBox="0 0 28 28" className="size-[28px]" aria-hidden="true">
          <circle cx="14" cy="14" r="14" fill="#fbc935" />
          <path d="M14 14 8 17.500 1.900 7A14 14 0 0 1 26.200 7.500H14z" fill="#dd4b3e" />
          <path d="M1.900 7 8 17.500a7 7 0 0 0 9.500 2.600L13.500 28A14 14 0 0 1 1.900 7z" fill="#1da462" />
          <circle cx="14" cy="14" r="6.500" fill="#fff" /><circle cx="14" cy="14" r="5" fill="#4c8bf5" />
        </svg>
      </button>
      <button aria-label="Groove Music" className="flex h-full w-[62px] items-center justify-center">
        <svg viewBox="0 0 30 30" className="size-[30px]" fill="none" stroke="#fff" aria-hidden="true">
          <path d="M21 3A13.300 13.300 0 1 0 27.500 10.500" strokeWidth="2.600" /><circle cx="15" cy="15" r="4" strokeWidth="4" /><path d="M22.500 8.500 28 4" strokeWidth="3" />
        </svg>
      </button>
      <button aria-label="Mail" className="flex h-full w-[62px] items-center justify-center">
        <svg viewBox="0 0 30 24" className="h-[24px] w-[30px]" aria-hidden="true"><path d="M0 9 15 0l15 9v15H0z" fill="#fff" /><path d="M2 10h27L15 16l7 5z" fill="#0c0c0c" /></svg>
      </button>
      <button aria-label="Eclipse" className="ml-[5px] flex h-full w-[51px] items-center justify-center border-b-[3px] border-[#a6cdf3] pt-[3px]">
        <svg viewBox="0 0 30 28" className="h-[28px] w-[30px]" aria-hidden="true">
          <path d="M14 0A14 14 0 0 0 14 28 16 16 0 0 1 14 0z" fill="#f7941e" /><circle cx="17" cy="14" r="13" fill="#2c2255" />
          <path d="M4 10.500h26M4 14h26M4 17.500h26" stroke="#fff" strokeWidth="1.800" />
        </svg>
      </button>
      <div className="ml-auto flex h-full items-center">
        <button aria-label="Show hidden icons" className="w-[17px]"><svg viewBox="0 0 17 10" className="h-[10px] w-[17px]" fill="none" stroke="#fff" strokeWidth="1.500" aria-hidden="true"><path d="M1 9 8.500 1 16 9" /></svg></button>
        <svg viewBox="0 0 20 14" className="ml-[11px] h-[14px] w-[20px]" aria-hidden="true"><path d="M5 4.500h13v8H3.500V8M19 7v3M1 1v3h3V1M2.500 4v4" fill="none" stroke="#fff" strokeWidth="1.400" /><path d="M6 6h10.500v5H5.500z" fill="#fff" /></svg>
        <svg viewBox="0 0 16 16" className="ml-[13px] size-[16px]" fill="none" stroke="#fff" strokeWidth="1.400" aria-hidden="true"><path d="M1 16A15 15 0 0 1 15 1" opacity=".5" /><path d="M5 16A11 11 0 0 1 15 5.500M9 16a7 7 0 0 1 6-6" /><circle cx="13.500" cy="14.500" r="1.300" fill="#fff" stroke="none" /></svg>
        <svg viewBox="0 0 21 16" className="ml-[11px] h-[16px] w-[21px]" fill="none" stroke="#fff" strokeWidth="1.300" aria-hidden="true"><path d="M1 5.500h3L8.500 1v14L4 10.500H1zM11 5q2 3 0 6" /><path d="M13.500 3q3.500 5 0 10M16.500 1q5 7 0 14" opacity=".5" /></svg>
        <button className="ml-[10px] w-[32px] text-[15px]">NLD</button>
        <div className="ml-[17px] flex w-[72px] flex-col whitespace-nowrap text-center text-[14px] leading-[23px]">
          <span>21:48</span>
          <span>5/05/2017</span>
        </div>
        <button aria-label="4 notifications" className="relative ml-[25px] h-[32px] w-[34px]">
          <svg viewBox="0 0 20 20" className="size-[20px]" aria-hidden="true"><path d="M0 0h20v16h-9l-4 4v-4H0z" fill="#fff" /><path d="M4 4h12M4 8h12M4 12h8" stroke="#0c0c0c" strokeWidth="1.500" /></svg>
          <span className="absolute left-[9px] top-[11px] flex size-[20px] items-center justify-center rounded-full border border-[#888] bg-[#333] text-[13px] font-semibold">4</span>
        </button>
        <div className="ml-[11px] mr-[5px] h-full w-px bg-[#4a4a4a]" />
      </div>
    </footer>
  );
}

export default function App() {
  return (
    <div className="flex h-screen flex-col overflow-hidden bg-white font-['Liberation_Sans',Arial,sans-serif]">
      <div className={"shrink-0 " + ui}>
        <TabStrip />
        <AddressBar />
        <BookmarkBar />
      </div>
      <AppNav />
      <Toolbar />
      <Workspace />
      <Taskbar />
    </div>
  );
}
